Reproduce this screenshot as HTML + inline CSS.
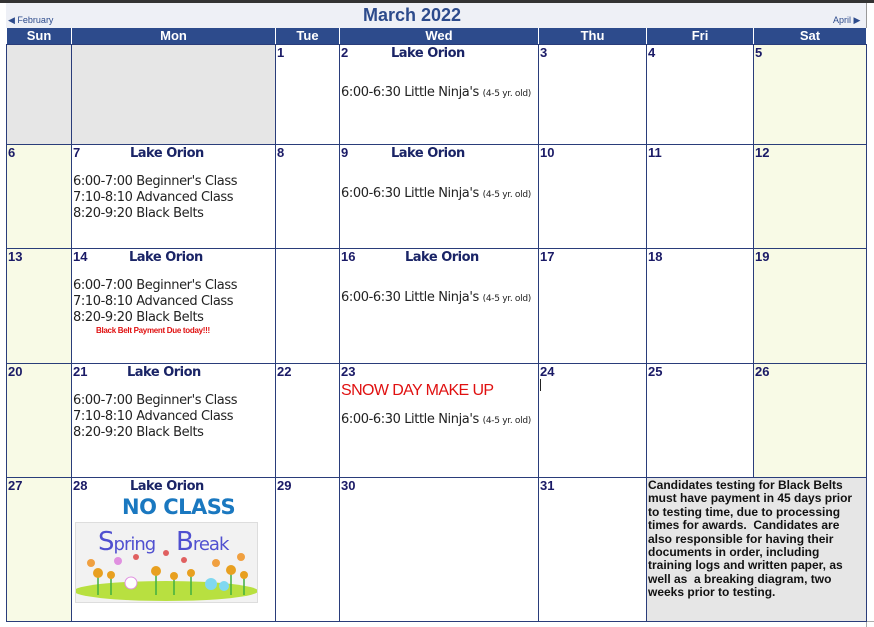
<!DOCTYPE html>
<html><head><meta charset="utf-8"><style>
*{margin:0;padding:0;box-sizing:border-box}
body{width:874px;height:627px;background:#fff;position:relative;overflow:hidden;font-family:"Liberation Sans",sans-serif}
.a{position:absolute}
.c{position:absolute;border-left:1px solid #2a3d7a;border-top:1px solid #2a3d7a}
.n{position:absolute;left:1px;top:0px;font:bold 13px "Liberation Sans",sans-serif;color:#1a1a66}
.lo{position:absolute;font:bold 13px "DejaVu Sans",sans-serif;color:#1a2466;letter-spacing:-0.5px}
.t{position:absolute;left:1px;font:13px "DejaVu Sans",sans-serif;color:#222;line-height:16px;white-space:nowrap;letter-spacing:-0.4px}
.t small{font-size:9px;letter-spacing:-0.3px}
.h{position:absolute;top:28px;height:16px;background:#2d4b8c;color:#fff;font:bold 13px "Liberation Sans",sans-serif;text-align:center;line-height:16px;border-left:1px solid #fff}
</style></head><body>
<div class="a" style="left:0;top:0;width:874px;height:3px;background:#333"></div>
<div class="a" style="left:6px;top:3px;width:861px;height:25px;background:#eef0f6;border-right:1px solid #999"></div>
<div class="a" style="left:8px;top:15px;font-size:9px;color:#2d4b8c">◀ February</div>
<div class="a" style="left:833px;top:15px;font-size:9px;color:#2d4b8c">April ▶</div>
<div class="a" style="left:0;width:824px;top:5px;text-align:center;font:bold 18px 'Liberation Sans',sans-serif;color:#2d4b8c">March 2022</div>
<div class="h" style="left:6px;width:65px">Sun</div>
<div class="h" style="left:71px;width:204px">Mon</div>
<div class="h" style="left:275px;width:64px">Tue</div>
<div class="h" style="left:339px;width:199px">Wed</div>
<div class="h" style="left:538px;width:108px">Thu</div>
<div class="h" style="left:646px;width:107px">Fri</div>
<div class="h" style="left:753px;width:113px">Sat</div>

<div class="c" style="left:6px;top:44px;width:65px;height:100px;background:#e6e6e6"></div>
<div class="c" style="left:71px;top:44px;width:204px;height:100px;background:#e6e6e6"></div>
<div class="c" style="left:275px;top:44px;width:64px;height:100px"><span class="n">1</span></div>
<div class="c" style="left:339px;top:44px;width:199px;height:100px"><span class="n">2</span><span class="lo" style="left:51px;top:1px">Lake Orion</span><span class="t" style="top:40px">6:00-6:30 Little Ninja's <small>(4-5 yr. old)</small></span></div>
<div class="c" style="left:538px;top:44px;width:108px;height:100px"><span class="n">3</span></div>
<div class="c" style="left:646px;top:44px;width:107px;height:100px"><span class="n">4</span></div>
<div class="c" style="left:753px;top:44px;width:113px;height:100px;background:#f8fae6"><span class="n">5</span></div>

<div class="c" style="left:6px;top:144px;width:65px;height:104px;background:#f8fae6"><span class="n">6</span></div>
<div class="c" style="left:71px;top:144px;width:204px;height:104px"><span class="n">7</span><span class="lo" style="left:58px;top:1px">Lake Orion</span><span class="t" style="top:29px">6:00-7:00 Beginner's Class<br>7:10-8:10 Advanced Class<br>8:20-9:20 Black Belts</span></div>
<div class="c" style="left:275px;top:144px;width:64px;height:104px"><span class="n">8</span></div>
<div class="c" style="left:339px;top:144px;width:199px;height:104px"><span class="n">9</span><span class="lo" style="left:51px;top:1px">Lake Orion</span><span class="t" style="top:41px">6:00-6:30 Little Ninja's <small>(4-5 yr. old)</small></span></div>
<div class="c" style="left:538px;top:144px;width:108px;height:104px"><span class="n">10</span></div>
<div class="c" style="left:646px;top:144px;width:107px;height:104px"><span class="n">11</span></div>
<div class="c" style="left:753px;top:144px;width:113px;height:104px;background:#f8fae6"><span class="n">12</span></div>

<div class="c" style="left:6px;top:248px;width:65px;height:115px;background:#f8fae6"><span class="n">13</span></div>
<div class="c" style="left:71px;top:248px;width:204px;height:115px"><span class="n">14</span><span class="lo" style="left:57px;top:1px">Lake Orion</span><span class="t" style="top:29px">6:00-7:00 Beginner's Class<br>7:10-8:10 Advanced Class<br>8:20-9:20 Black Belts</span><span class="a" style="left:24px;top:77px;font:bold 8px 'Liberation Sans',sans-serif;color:#e01010;letter-spacing:-0.3px">Black Belt Payment Due today!!!</span></div>
<div class="c" style="left:275px;top:248px;width:64px;height:115px"></div>
<div class="c" style="left:339px;top:248px;width:199px;height:115px"><span class="n">16</span><span class="lo" style="left:65px;top:1px">Lake Orion</span><span class="t" style="top:41px">6:00-6:30 Little Ninja's <small>(4-5 yr. old)</small></span></div>
<div class="c" style="left:538px;top:248px;width:108px;height:115px"><span class="n">17</span></div>
<div class="c" style="left:646px;top:248px;width:107px;height:115px"><span class="n">18</span></div>
<div class="c" style="left:753px;top:248px;width:113px;height:115px;background:#f8fae6"><span class="n">19</span></div>

<div class="c" style="left:6px;top:363px;width:65px;height:114px;background:#f8fae6"><span class="n">20</span></div>
<div class="c" style="left:71px;top:363px;width:204px;height:114px"><span class="n">21</span><span class="lo" style="left:55px;top:1px">Lake Orion</span><span class="t" style="top:29px">6:00-7:00 Beginner's Class<br>7:10-8:10 Advanced Class<br>8:20-9:20 Black Belts</span></div>
<div class="c" style="left:275px;top:363px;width:64px;height:114px"><span class="n">22</span></div>
<div class="c" style="left:339px;top:363px;width:199px;height:114px"><span class="n">23</span><span class="a" style="left:1px;top:18px;font:16px 'Liberation Sans',sans-serif;color:#e01010;letter-spacing:-0.6px">SNOW DAY MAKE UP</span><span class="t" style="top:48px">6:00-6:30 Little Ninja's <small>(4-5 yr. old)</small></span></div>
<div class="c" style="left:538px;top:363px;width:108px;height:114px"><span class="n">24</span><span class="a" style="left:1px;top:15px;width:1px;height:12px;background:#222"></span></div>
<div class="c" style="left:646px;top:363px;width:107px;height:114px"><span class="n">25</span></div>
<div class="c" style="left:753px;top:363px;width:113px;height:114px;background:#f8fae6"><span class="n">26</span></div>

<div class="c" style="left:6px;top:477px;width:65px;height:145px;background:#f8fae6"><span class="n">27</span></div>
<div class="c" style="left:71px;top:477px;width:204px;height:145px"><span class="n">28</span><span class="lo" style="left:58px;top:1px">Lake Orion</span>
<span class="a" style="left:50px;top:17px;font:bold 21px 'DejaVu Sans',sans-serif;color:#1a78c0;letter-spacing:-0.5px">NO CLASS</span>
<div class="a" style="left:3px;top:44px;width:183px;height:81px;background:#f2f2f2;border:1px solid #ddd;overflow:hidden">
<span class="a" style="left:22px;top:4px;font:26px 'DejaVu Sans',sans-serif;color:#5050d0;letter-spacing:-1px">S<span style="font-size:18px">pring</span></span>
<span class="a" style="left:100px;top:4px;font:26px 'DejaVu Sans',sans-serif;color:#5050d0;letter-spacing:-1px">B<span style="font-size:18px">reak</span></span>
<svg class="a" style="left:0;top:0" width="183" height="81"><ellipse cx="90" cy="68" rx="92" ry="10" fill="#b8e040"/>
<g stroke="#40b040" stroke-width="1.5"><path d="M22 50V72M35 52V72M80 48V72M98 53V72M115 50V72M155 47V72M168 52V72"/></g>
<g fill="#e8a020"><circle cx="22" cy="50" r="5"/><circle cx="35" cy="52" r="4"/><circle cx="80" cy="48" r="5"/><circle cx="98" cy="53" r="4"/><circle cx="115" cy="50" r="4"/><circle cx="155" cy="47" r="5"/><circle cx="168" cy="52" r="4"/></g>
<g fill="#e06060"><circle cx="60" cy="34" r="3"/><circle cx="90" cy="30" r="3"/><circle cx="108" cy="37" r="3"/></g>
<circle cx="55" cy="60" r="6" fill="#fff" stroke="#e090e0"/><circle cx="135" cy="61" r="6" fill="#80d8f0"/><circle cx="148" cy="63" r="5" fill="#80d8f0"/>
<circle cx="15" cy="40" r="4" fill="#f0a040"/><circle cx="42" cy="38" r="4" fill="#e090e0"/><circle cx="140" cy="40" r="4" fill="#f0a040"/><circle cx="165" cy="34" r="4" fill="#f0a040"/></svg>
</div></div>
<div class="c" style="left:275px;top:477px;width:64px;height:145px"><span class="n">29</span></div>
<div class="c" style="left:339px;top:477px;width:199px;height:145px"><span class="n">30</span></div>
<div class="c" style="left:538px;top:477px;width:108px;height:145px"><span class="n">31</span></div>
<div class="c" style="left:646px;top:477px;width:220px;height:145px;background:#e6e6e6"><div class="a" style="left:1px;top:1px;width:214px;font:bold 12px 'Liberation Sans',sans-serif;color:#111;line-height:13.4px">Candidates testing for Black Belts<br>must have payment in 45 days prior<br>to testing time, due to processing<br>times for awards.&nbsp; Candidates are<br>also responsible for having their<br>documents in order, including<br>training logs and written paper, as<br>well as&nbsp; a breaking diagram, two<br>weeks prior to testing.</div></div>
<div class="a" style="left:6px;top:44px;width:861px;height:578px;border-right:1px solid #2a3d7a;border-bottom:1px solid #2a3d7a;z-index:5"></div>
<div class="a" style="left:866px;top:621px;width:8px;height:6px;border-left:1px solid #aaa;border-top:1px solid #aaa"></div>
</body></html>
